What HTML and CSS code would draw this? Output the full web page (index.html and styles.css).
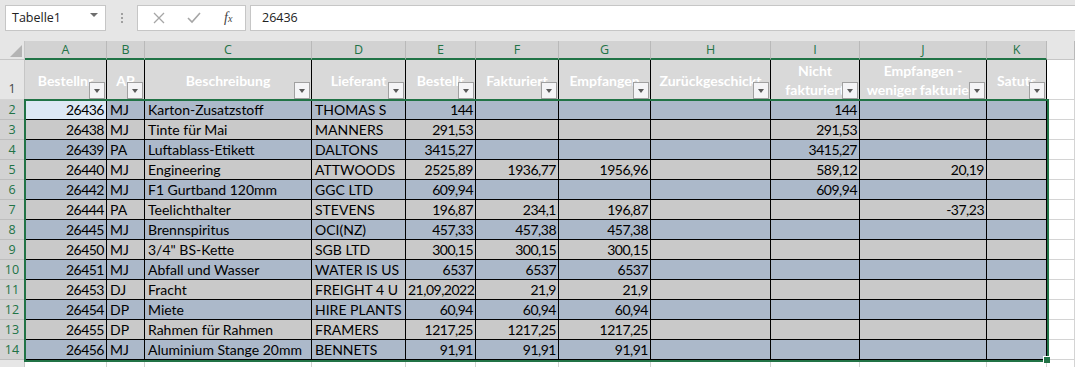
FILE: index.html
```html
<!DOCTYPE html>
<html lang="de">
<head>
    <meta charset="UTF-8">
    <title>Tabelle1</title>
    <link rel="stylesheet" href="styles.css">
</head>
<body>
    <div class="toolbar">
        <div class="name-box">
            <span>Tabelle1</span>
            <span class="nb-arrow"></span>
        </div>
        <div class="dots"><i></i><i></i><i></i></div>
        <div class="fx-buttons">
            <svg width="14" height="14" viewBox="0 0 14 14"><path d="M2 2 L12 12 M12 2 L2 12" stroke="#a6a6a6" stroke-width="1.3" fill="none"/></svg>
            <svg width="16" height="14" viewBox="0 0 16 14"><path d="M2 7 L6 11 L14 2" stroke="#a6a6a6" stroke-width="1.6" fill="none"/></svg>
            <span class="fx">f<small>x</small></span>
        </div>
        <div class="formula-input">26436</div>
    </div>

    <div class="sheet">
        <div class="row col-head">
            <div class="corner"><svg width="25" height="19" viewBox="0 0 25 19"><path d="M22 4 L22 16 L10 16 Z" fill="#b4b4b4"/></svg></div>
            <div class="ch">A</div><div class="ch">B</div><div class="ch">C</div><div class="ch">D</div>
            <div class="ch">E</div><div class="ch">F</div><div class="ch">G</div><div class="ch">H</div>
            <div class="ch">I</div><div class="ch">J</div><div class="ch">K</div><div class="ch off"></div>
        </div>

        <div class="row head-row">
            <div class="rh plain">1</div>
            <div class="hc"><span>Bestellnr</span><b class="filter"></b></div>
            <div class="hc"><span>AP</span><b class="filter"></b></div>
            <div class="hc"><span>Beschreibung</span><b class="filter"></b></div>
            <div class="hc"><span>Lieferant</span><b class="filter"></b></div>
            <div class="hc"><span>Bestellt</span><b class="filter"></b></div>
            <div class="hc"><span>Fakturiert</span><b class="filter"></b></div>
            <div class="hc"><span>Empfangen</span><b class="filter"></b></div>
            <div class="hc"><span>Zurückgeschickt</span><b class="filter"></b></div>
            <div class="hc"><span>Nicht<br>fakturiert</span><b class="filter"></b></div>
            <div class="hc"><span>Empfangen -<br>weniger fakturiert</span><b class="filter"></b></div>
            <div class="hc"><span>Satuts</span><b class="filter"></b></div>
            <div class="gc"></div>
        </div>

        <div class="row blue">
            <div class="rh">2</div>
            <div class="c n active">26436</div><div class="c">MJ</div><div class="c">Karton-Zusatzstoff</div><div class="c">THOMAS S</div>
            <div class="c n">144</div><div class="c n"></div><div class="c n"></div><div class="c"></div>
            <div class="c n">144</div><div class="c n"></div><div class="c"></div><div class="gc"></div>
        </div>
        <div class="row gray">
            <div class="rh">3</div>
            <div class="c n">26438</div><div class="c">MJ</div><div class="c">Tinte für Mai</div><div class="c">MANNERS</div>
            <div class="c n">291,53</div><div class="c n"></div><div class="c n"></div><div class="c"></div>
            <div class="c n">291,53</div><div class="c n"></div><div class="c"></div><div class="gc"></div>
        </div>
        <div class="row blue">
            <div class="rh">4</div>
            <div class="c n">26439</div><div class="c">PA</div><div class="c">Luftablass-Etikett</div><div class="c">DALTONS</div>
            <div class="c n">3415,27</div><div class="c n"></div><div class="c n"></div><div class="c"></div>
            <div class="c n">3415,27</div><div class="c n"></div><div class="c"></div><div class="gc"></div>
        </div>
        <div class="row gray">
            <div class="rh">5</div>
            <div class="c n">26440</div><div class="c">MJ</div><div class="c">Engineering</div><div class="c">ATTWOODS</div>
            <div class="c n">2525,89</div><div class="c n">1936,77</div><div class="c n">1956,96</div><div class="c"></div>
            <div class="c n">589,12</div><div class="c n">20,19</div><div class="c"></div><div class="gc"></div>
        </div>
        <div class="row blue">
            <div class="rh">6</div>
            <div class="c n">26442</div><div class="c">MJ</div><div class="c">F1 Gurtband 120mm</div><div class="c">GGC LTD</div>
            <div class="c n">609,94</div><div class="c n"></div><div class="c n"></div><div class="c"></div>
            <div class="c n">609,94</div><div class="c n"></div><div class="c"></div><div class="gc"></div>
        </div>
        <div class="row gray">
            <div class="rh">7</div>
            <div class="c n">26444</div><div class="c">PA</div><div class="c">Teelichthalter</div><div class="c">STEVENS</div>
            <div class="c n">196,87</div><div class="c n">234,1</div><div class="c n">196,87</div><div class="c"></div>
            <div class="c n"></div><div class="c n">-37,23</div><div class="c"></div><div class="gc"></div>
        </div>
        <div class="row blue">
            <div class="rh">8</div>
            <div class="c n">26445</div><div class="c">MJ</div><div class="c">Brennspiritus</div><div class="c">OCI(NZ)</div>
            <div class="c n">457,33</div><div class="c n">457,38</div><div class="c n">457,38</div><div class="c"></div>
            <div class="c n"></div><div class="c n"></div><div class="c"></div><div class="gc"></div>
        </div>
        <div class="row gray">
            <div class="rh">9</div>
            <div class="c n">26450</div><div class="c">MJ</div><div class="c">3/4" BS-Kette</div><div class="c">SGB LTD</div>
            <div class="c n">300,15</div><div class="c n">300,15</div><div class="c n">300,15</div><div class="c"></div>
            <div class="c n"></div><div class="c n"></div><div class="c"></div><div class="gc"></div>
        </div>
        <div class="row blue">
            <div class="rh">10</div>
            <div class="c n">26451</div><div class="c">MJ</div><div class="c">Abfall und Wasser</div><div class="c">WATER IS US</div>
            <div class="c n">6537</div><div class="c n">6537</div><div class="c n">6537</div><div class="c"></div>
            <div class="c n"></div><div class="c n"></div><div class="c"></div><div class="gc"></div>
        </div>
        <div class="row gray">
            <div class="rh">11</div>
            <div class="c n">26453</div><div class="c">DJ</div><div class="c">Fracht</div><div class="c">FREIGHT 4 U</div>
            <div class="c n">21,09,2022</div><div class="c n">21,9</div><div class="c n">21,9</div><div class="c"></div>
            <div class="c n"></div><div class="c n"></div><div class="c"></div><div class="gc"></div>
        </div>
        <div class="row blue">
            <div class="rh">12</div>
            <div class="c n">26454</div><div class="c">DP</div><div class="c">Miete</div><div class="c">HIRE PLANTS</div>
            <div class="c n">60,94</div><div class="c n">60,94</div><div class="c n">60,94</div><div class="c"></div>
            <div class="c n"></div><div class="c n"></div><div class="c"></div><div class="gc"></div>
        </div>
        <div class="row gray">
            <div class="rh">13</div>
            <div class="c n">26455</div><div class="c">DP</div><div class="c">Rahmen für Rahmen</div><div class="c">FRAMERS</div>
            <div class="c n">1217,25</div><div class="c n">1217,25</div><div class="c n">1217,25</div><div class="c"></div>
            <div class="c n"></div><div class="c n"></div><div class="c"></div><div class="gc"></div>
        </div>
        <div class="row blue">
            <div class="rh">14</div>
            <div class="c n">26456</div><div class="c">MJ</div><div class="c">Aluminium Stange 20mm</div><div class="c">BENNETS</div>
            <div class="c n">91,91</div><div class="c n">91,91</div><div class="c n">91,91</div><div class="c"></div>
            <div class="c n"></div><div class="c n"></div><div class="c"></div><div class="gc"></div>
        </div>
        <div class="row empty">
            <div class="rh plain"></div>
            <div class="gc"></div><div class="gc"></div><div class="gc"></div><div class="gc"></div>
            <div class="gc"></div><div class="gc"></div><div class="gc"></div><div class="gc"></div>
            <div class="gc"></div><div class="gc"></div><div class="gc"></div><div class="gc"></div>
        </div>

        <div class="selection"></div>
        <div class="fill-handle"></div>
    </div>
</body>
</html>
```

FILE: styles.css
```css
body {
    margin: 0;
    background: #e6e6e6;
    font-family: Lato, "Liberation Sans", sans-serif;
    overflow: hidden;
}
.toolbar {
    display: flex;
    align-items: flex-start;
    height: 41px;
    padding: 5px 0 0 5px;
    box-sizing: border-box;
    font-family: "Open Sans", sans-serif;
    font-size: 12.5px;
    color: #222;
}
.name-box {
    width: 101px;
    height: 26px;
    box-sizing: border-box;
    background: #fff;
    border: 1px solid #c6c6c6;
    display: flex;
    align-items: center;
    justify-content: space-between;
    padding: 0 7px 1px 6px;
}
.nb-arrow {
    width: 0;
    height: 0;
    border-left: 4px solid transparent;
    border-right: 4px solid transparent;
    border-top: 4px solid #6e6e6e;
    margin-top: -6px;
}
.dots {
    width: 31px;
    height: 26px;
    display: flex;
    flex-direction: column;
    align-items: center;
    justify-content: center;
    gap: 2px;
}
.dots i {
    width: 2px;
    height: 2px;
    background: #a0a0a0;
}
.fx-buttons {
    width: 109px;
    height: 26px;
    box-sizing: border-box;
    background: #fff;
    border: 1px solid #c6c6c6;
    display: flex;
    align-items: center;
    padding: 0 0 0 14px;
    gap: 20px;
}
.fx {
    font-family: "Liberation Serif", serif;
    font-style: italic;
    font-size: 14px;
    color: #444;
    margin-left: 2px;
}
.fx small {
    font-size: 10px;
}
.formula-input {
    flex: 1;
    height: 26px;
    box-sizing: border-box;
    margin-left: 4px;
    background: #fff;
    border: 1px solid #c6c6c6;
    border-right: none;
    padding: 3px 11px;
}

.sheet {
    position: relative;
    font-size: 14px;
}
.row {
    display: grid;
    grid-template-columns: 25px 82px 38px 167px 94px 70px 83px 92px 120px 89px 127px 60px 1fr;
    height: 20px;
}
.row > div {
    box-sizing: border-box;
    white-space: nowrap;
    overflow: hidden;
}

.col-head {
    height: 19px;
    font-family: "Open Sans", sans-serif;
    font-size: 12.5px;
}
.corner {
    background: #e6e6e6;
    border-right: 1px solid #c6c6c6;
    border-bottom: 1px solid #c6c6c6;
}
.corner svg {
    display: block;
}
.ch {
    background: #d2d2d2;
    color: #217346;
    text-align: center;
    line-height: 17px;
    border-right: 1px solid #b9b9b9;
    border-bottom: 2px solid #217346;
}
.ch.off {
    background: #e6e6e6;
    border-bottom: 1px solid #c6c6c6;
}

.rh {
    background: #d2d2d2;
    color: #217346;
    text-align: center;
    font-family: "Open Sans", sans-serif;
    font-size: 12.5px;
    line-height: 19px;
    border-right: 1px solid #c6c6c6;
    border-bottom: 1px solid #bdbdbd;
}
.rh.plain {
    background: #e6e6e6;
    color: #444;
    border-bottom-color: #d4d4d4;
}

.head-row {
    height: 40px;
}
.head-row .rh {
    display: flex;
    align-items: flex-end;
    justify-content: center;
    line-height: 20px;
}
.hc {
    position: relative;
    background: #d9d9d9;
    border-right: 1px solid #000;
    display: flex;
    align-items: center;
    justify-content: center;
    color: #fff;
    font-weight: bold;
    line-height: 19px;
    text-align: center;
}
.filter {
    position: absolute;
    right: 1px;
    bottom: 1px;
    width: 16px;
    height: 17px;
    box-sizing: border-box;
    background: #f4f4f6;
    border: 1px solid #a0a0a0;
}
.filter::after {
    content: "";
    position: absolute;
    left: 4px;
    top: 6px;
    border-left: 3.5px solid transparent;
    border-right: 3.5px solid transparent;
    border-top: 4px solid #595959;
}

.c {
    border-right: 1px solid #000;
    border-bottom: 1px solid #000;
    padding: 0 3px;
    line-height: 19px;
    color: #000;
}
.c.n {
    text-align: right;
    padding: 0 2px;
    letter-spacing: -0.5px;
}
.blue .c {
    background: #acb9ca;
}
.gray .c {
    background: #c9c9c9;
}
.blue .c.active {
    background: #dde8f4;
}
.gc {
    background: #fff;
    border-right: 1px solid #d4d4d4;
    border-bottom: 1px solid #d4d4d4;
}

.selection {
    position: absolute;
    left: 24px;
    top: 58px;
    width: 1025px;
    height: 263px;
    box-sizing: border-box;
    border: 2px solid #217346;
    pointer-events: none;
}
.fill-handle {
    position: absolute;
    left: 1044px;
    top: 316px;
    width: 6px;
    height: 6px;
    background: #217346;
    box-shadow: -1px -1px 0 #fff;
}
```
